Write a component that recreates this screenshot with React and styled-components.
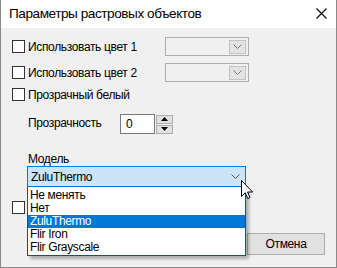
import React from "react";
import styled, { createGlobalStyle } from "styled-components";

const Global = createGlobalStyle`
  html, body { margin: 0; padding: 0; background: #f0f0f0; }
  body { font-family: "Liberation Sans", Arial, sans-serif; }
  * { box-sizing: border-box; }
`;

const Window = styled.div`
  width: 337px;
  height: 268px;
  border: 1px solid #8a8a8a;
  border-top: none;
  display: flex;
  flex-direction: column;
  background: #f0f0f0;
  overflow: hidden;
  position: relative;
`;

const TitleBar = styled.div`
  height: 28px;
  background: #fff;
  display: flex;
  align-items: center;
  justify-content: space-between;
  padding: 0 9px 1px 8px;
  flex: none;
`;

const Title = styled.div`
  font-size: 13.6px;
  letter-spacing: -0.45px;
  color: #000;
`;

const Body = styled.div`
  flex: 1;
  display: flex;
  flex-direction: column;
  padding: 0 11px 0 11px;
  font-size: 12px;
  letter-spacing: -0.35px;
  color: #000;
`;

const Row = styled.div`
  display: flex;
  align-items: center;
  height: ${(p) => p.$h}px;
  margin-top: ${(p) => p.$mt}px;
  padding-left: ${(p) => p.$indent || 0}px;
  position: relative;
`;

const Box = styled.span`
  width: 13px;
  height: 13px;
  border: 1px solid #333;
  background: #fff;
  flex: none;
`;

const Label = styled.span`
  margin-left: ${(p) => p.$ml || 0}px;
  width: ${(p) => (p.$w ? p.$w + "px" : "auto")};
  flex: none;
  white-space: nowrap;
  padding-bottom: ${(p) => p.$pb || 0}px;
`;

const DisabledCombo = styled.div`
  width: 84px;
  height: 19px;
  border: 1px solid #adadad;
  background: #f0f0f0;
  display: flex;
  justify-content: flex-end;
  align-items: center;
  padding-right: 2px;
`;

const DisabledArrow = styled.div`
  width: 17px;
  height: 14px;
  border: 1px solid #c4c4c4;
  background: #e3e3e3;
  display: flex;
  align-items: center;
  justify-content: center;
`;

const SpinInput = styled.div`
  width: 35px;
  height: 20px;
  border: 1px solid #7a7a7a;
  background: #fff;
  display: flex;
  align-items: center;
  padding-left: 5px;
`;

const SpinButtons = styled.div`
  display: flex;
  flex-direction: column;
  gap: 1px;
  margin-left: 1px;
`;

const SpinBtn = styled.div`
  width: 17px;
  height: 9px;
  border: 1px solid #adadad;
  background: #e1e1e1;
  display: flex;
  align-items: center;
  justify-content: center;
`;

const ComboWrap = styled.div`
  position: relative;
  margin-left: 15px;
  width: 219px;
  height: 21px;
`;

const OpenCombo = styled.div`
  width: 100%;
  height: 100%;
  border: 1px solid #0078d7;
  background: #cce4f7;
  display: flex;
  align-items: center;
  justify-content: space-between;
  padding: 0 5px 0 3px;
`;

const List = styled.div`
  position: absolute;
  left: 0;
  top: 21px;
  width: 219px;
  background: #fff;
  border: 1px solid #1a4f80;
  border-top: none;
  box-shadow: 3px 3px 3px rgba(0, 0, 0, 0.28);
  padding: 2px 0 1px 0;
  z-index: 5;
`;

const Item = styled.div`
  height: 13px;
  line-height: 13px;
  padding-left: 2px;
  background: ${(p) => (p.$sel ? "#0078d7" : "#fff")};
  color: ${(p) => (p.$sel ? "#fff" : "#000")};
  white-space: nowrap;
`;

const ButtonRow = styled.div`
  display: flex;
  justify-content: flex-end;
  gap: 6px;
  margin-top: ${(p) => p.$mt}px;
`;

const Button = styled.div`
  width: 78px;
  height: 22px;
  border: 1px solid #adadad;
  background: #e1e1e1;
  display: flex;
  align-items: center;
  justify-content: center;
`;

const Cursor = styled.svg`
  position: absolute;
  left: 240px;
  top: 180px;
  z-index: 10;
`;

const Chevron = ({ color = "#555" }) => (
  <svg width="9" height="5" viewBox="0 0 9 5">
    <path d="M0.5 0.5 L4.5 4.5 L8.5 0.5" fill="none" stroke={color} strokeWidth="1" />
  </svg>
);

const Tri = ({ up }) => (
  <svg width="7" height="4" viewBox="0 0 7 4">
    <path d={up ? "M0 4 L3.5 0 L7 4 Z" : "M0 0 L3.5 4 L7 0 Z"} fill="#000" />
  </svg>
);

export default function App() {
  const items = ["Не менять", "Нет", "ZuluThermo", "Flir Iron", "Flir Grayscale"];
  return (
    <>
      <Global />
      <Window>
        <TitleBar>
          <Title>Параметры растровых объектов</Title>
          <svg width="11" height="11" viewBox="0 0 11 11">
            <path d="M0.5 0.5 L10.5 10.5 M10.5 0.5 L0.5 10.5" stroke="#000" strokeWidth="1.1" />
          </svg>
        </TitleBar>
        <Body>
          <Row $h={19} $mt={9}>
            <Box />
            <Label $ml={3} $w={137}>Использовать цвет 1</Label>
            <DisabledCombo>
              <DisabledArrow>
                <Chevron color="#777" />
              </DisabledArrow>
            </DisabledCombo>
          </Row>
          <Row $h={19} $mt={7}>
            <Box />
            <Label $ml={3} $w={137}>Использовать цвет 2</Label>
            <DisabledCombo>
              <DisabledArrow>
                <Chevron color="#777" />
              </DisabledArrow>
            </DisabledCombo>
          </Row>
          <Row $h={19} $mt={3}>
            <Box />
            <Label $ml={3}>Прозрачный белый</Label>
          </Row>
          <Row $h={20} $mt={10} $indent={16}>
            <Label $w={92} $pb={3}>Прозрачность</Label>
            <SpinInput>0</SpinInput>
            <SpinButtons>
              <SpinBtn>
                <Tri up />
              </SpinBtn>
              <SpinBtn>
                <Tri />
              </SpinBtn>
            </SpinButtons>
          </Row>
          <Row $h={15} $mt={17} $indent={16}>
            <Label>Модель</Label>
          </Row>
          <ComboWrap>
            <OpenCombo>
              <span>ZuluThermo</span>
              <Chevron />
            </OpenCombo>
            <List>
              {items.map((t) => (
                <Item key={t} $sel={t === "ZuluThermo"}>
                  {t}
                </Item>
              ))}
            </List>
          </ComboWrap>
          <Row $h={13} $mt={14}>
            <Box />
          </Row>
          <ButtonRow $mt={19}>
            <Button>OK</Button>
            <Button>Отмена</Button>
          </ButtonRow>
        </Body>
        <Cursor width="13" height="20" viewBox="0 0 13 20">
          <path
            d="M0.5 0.5 L0.5 16.5 L4.3 12.8 L6.8 18.6 L9 17.6 L6.6 12 L11.6 12 Z"
            fill="#fff"
            stroke="#000"
            strokeWidth="1"
          />
        </Cursor>
      </Window>
    </>
  );
}
